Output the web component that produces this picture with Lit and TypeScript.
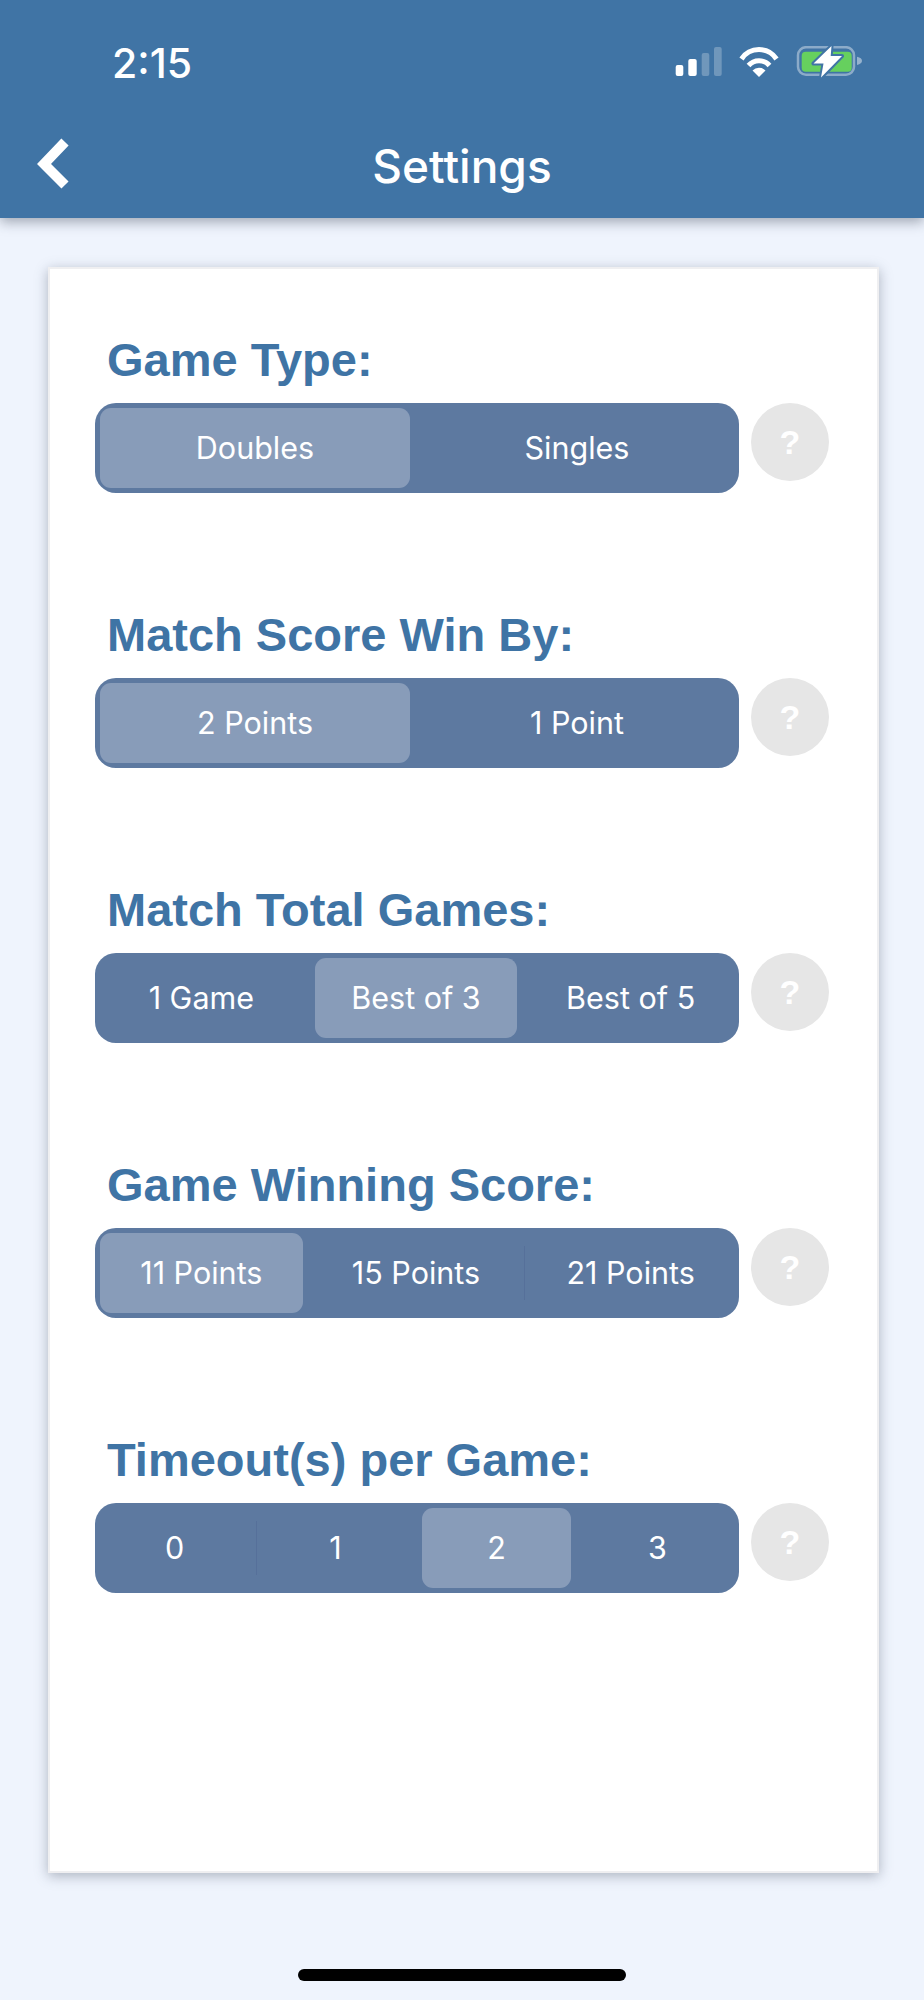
import { LitElement, html, css, svg } from "lit";
import { customElement } from "lit/decorators.js";

const rows = [
  { title: "Game Type:", opts: ["Doubles", "Singles"], sel: 0 },
  { title: "Match Score Win By:", opts: ["2 Points", "1 Point"], sel: 0 },
  { title: "Match Total Games:", opts: ["1 Game", "Best of 3", "Best of 5"], sel: 1 },
  { title: "Game Winning Score:", opts: ["11 Points", "15 Points", "21 Points"], sel: 0 },
  { title: "Timeout(s) per Game:", opts: ["0", "1", "2", "3"], sel: 2 },
];

@customElement("app-root")
export class AppRoot extends LitElement {
  static styles = css`
    :host { display: block; width: 924px; height: 2000px; background: #eff4fd; overflow: hidden; font-family: Inter, "Liberation Sans", sans-serif; }
    .header { height: 218px; background: #4074a5; box-shadow: 0 4px 12px rgba(40,50,70,.4); color: #fff; display: flex; flex-direction: column; position: relative; z-index: 1; }
    .status { height: 126px; display: flex; align-items: center; padding: 0 62px 0 112px; }
    .time { font-size: 41px; font-weight: 500; line-height: 1; flex: 1; }
    .status svg { display: block; }
    .nav { flex: 1; display: grid; grid-template-columns: 1fr auto 1fr; align-items: center; padding: 0 0 12px 0; }
    .nav svg { display: block; margin-left: 36px; margin-bottom: 4px; }
    .nav h1 { margin: 0; font-size: 46px; font-weight: 500; line-height: 1; }
    .card { margin: 49px 45px 0 48px; height: 1606px; box-sizing: border-box; background: #fff; border: 2px solid #efeff1; box-shadow: 0 3px 12px rgba(70,80,100,.4); padding: 65px 47px 0 45px; display: flex; flex-direction: column; gap: 116px; }
    .title { margin: 0 0 17px 12px; font: bold 47px/52px "Liberation Sans", Arial, sans-serif; color: #3f74a5; }
    .line { display: flex; gap: 12px; align-items: flex-start; }
    .track { width: 644px; height: 90px; border-radius: 21px; background: #5d79a0; display: grid; grid-auto-flow: column; grid-auto-columns: 1fr; flex: none; }
    .seg { display: flex; padding: 5px 7px 5px 5px; position: relative; min-width: 0; }
    .seg + .seg::before { content: ""; position: absolute; left: 0; top: 18px; bottom: 18px; width: 1px; background: #56709a; }
    .seg.on::before, .seg.on + .seg::before { display: none; }
    .label { flex: 1; display: flex; align-items: center; justify-content: center; border-radius: 11px; color: #fff; font-size: 30.500px; line-height: 1; }
    .seg.on .label { background: #889cb9; }
    .help { width: 78px; height: 78px; border-radius: 50%; background: #e6e6e6; color: #fff; font: bold 34px/78px "Liberation Sans", Arial, sans-serif; text-align: center; flex: none; }
    .home { width: 328px; height: 12px; border-radius: 6px; background: #000; margin: 96px auto 0; }
  `;

  render() {
    return html`
      <div class="header">
        <div class="status">
          <div class="time">2:15</div>
          <svg width="187" height="34" viewBox="0 0 187 34">
            ${svg`
            <rect x="0.700" y="19" width="7.600" height="11" rx="2" fill="#fff"/>
            <rect x="13.300" y="13" width="8.400" height="17" rx="2" fill="#fff"/>
            <rect x="26.700" y="7" width="7.600" height="23" rx="2" fill="#fff" fill-opacity=".25"/>
            <rect x="39" y="1" width="7.700" height="29" rx="2" fill="#fff" fill-opacity=".25"/>
            <g fill="none" stroke="#fff" stroke-width="5">
              <path d="M66.500 13 A21 21 0 0 1 101.500 13"/>
              <path d="M73.500 19.500 A14 14 0 0 1 94.500 19.500"/>
            </g>
            <path d="M77.500 24.500 A9 9 0 0 1 90.500 24.500 L84 31 Z" fill="#fff"/>
            <rect x="123" y="1.200" width="56" height="27.600" rx="8" fill="none" stroke="#fff" stroke-opacity=".4" stroke-width="2.500"/>
            <rect x="126.700" y="5.700" width="50" height="20" rx="4" fill="#66d05e"/>
            <path d="M182 10.700 q5 1 5 4 t-5 4.300 Z" fill="#fff" fill-opacity=".45"/>
            <path d="M156.500 0 L138.500 17.500 H148.500 L146 31.500 L167 10 H155.700 Z" fill="#fff" stroke="#4074a5" stroke-width="4" stroke-linejoin="round" paint-order="stroke"/>
            `}
          </svg>
        </div>
        <div class="nav">
          <svg width="36" height="52" viewBox="0 0 36 52"><path d="M29 4 L8 26 L29 47" fill="none" stroke="#fff" stroke-width="10"/></svg>
          <h1>Settings</h1>
          <span></span>
        </div>
      </div>
      <div class="card">
        ${rows.map((r) => html`
          <section>
            <h2 class="title">${r.title}</h2>
            <div class="line">
              <div class="track">
                ${r.opts.map((o, i) => html`<div class="seg ${i === r.sel ? "on" : ""}"><span class="label">${o}</span></div>`)}
              </div>
              <div class="help">?</div>
            </div>
          </section>
        `)}
      </div>
      <div class="home"></div>
    `;
  }
}
